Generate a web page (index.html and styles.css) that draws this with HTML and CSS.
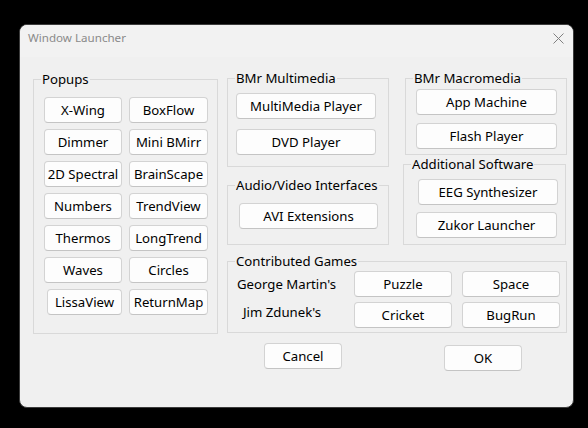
FILE: index.html
```html
<!DOCTYPE html>
<html>
<head>
<meta charset="utf-8">
<title>Window Launcher</title>
<link rel="stylesheet" href="styles.css">
</head>
<body>
<div class="window">
  <div class="titlebar">
    <span class="title">Window Launcher</span>
    <svg class="close" width="11" height="11" viewBox="0 0 11 11"><path d="M0.5 0.5 L10.5 10.5 M10.5 0.5 L0.5 10.5" stroke="#808080" stroke-width="1" fill="none"/></svg>
  </div>
  <div class="content">
    <fieldset class="group popups">
      <legend>Popups</legend>
      <div class="popup-grid">
        <button class="btn">X-Wing</button><button class="btn">BoxFlow</button>
        <button class="btn">Dimmer</button><button class="btn">Mini BMirr</button>
        <button class="btn">2D Spectral</button><button class="btn">BrainScape</button>
        <button class="btn">Numbers</button><button class="btn">TrendView</button>
        <button class="btn">Thermos</button><button class="btn">LongTrend</button>
        <button class="btn">Waves</button><button class="btn">Circles</button>
        <button class="btn lissa">LissaView</button><button class="btn">ReturnMap</button>
      </div>
    </fieldset>
    <div class="right">
      <div class="top-row">
        <div class="mid-col">
          <fieldset class="group multimedia">
            <legend>BMr Multimedia</legend>
            <div class="stack mm-stack">
              <button class="btn wide">MultiMedia Player</button>
              <button class="btn wide">DVD Player</button>
            </div>
          </fieldset>
          <fieldset class="group avi">
            <legend>Audio/Video Interfaces</legend>
            <div class="stack avi-stack">
              <button class="btn wide avi-btn">AVI Extensions</button>
            </div>
          </fieldset>
        </div>
        <div class="right-col">
          <fieldset class="group macro">
            <legend>BMr Macromedia</legend>
            <div class="stack macro-stack">
              <button class="btn wide2">App Machine</button>
              <button class="btn wide2">Flash Player</button>
            </div>
          </fieldset>
          <fieldset class="group additional">
            <legend>Additional Software</legend>
            <div class="stack add-stack">
              <button class="btn wide2 eeg">EEG Synthesizer</button>
              <button class="btn wide2">Zukor Launcher</button>
            </div>
          </fieldset>
        </div>
      </div>
      <fieldset class="group games">
        <legend>Contributed Games</legend>
        <div class="games-grid">
          <span class="author">George Martin's</span>
          <button class="btn game">Puzzle</button>
          <button class="btn game">Space</button>
          <span class="author author-jim">Jim Zdunek's</span>
          <button class="btn game">Cricket</button>
          <button class="btn game">BugRun</button>
        </div>
      </fieldset>
      <div class="actions">
        <button class="btn action">Cancel</button>
        <button class="btn action ok">OK</button>
      </div>
    </div>
  </div>
</div>
</body>
</html>
```
FILE: styles.css
```css
html, body {
  margin: 0;
  padding: 0;
}
body {
  background: #000;
  width: 588px;
  height: 428px;
  padding: 24px 0 0 19px;
  box-sizing: border-box;
  font-family: "Noto Sans", "Open Sans", sans-serif;
  color: #000;
}
.window {
  width: 555px;
  height: 384px;
  box-sizing: border-box;
  background: #f0f0f0;
  border: 1px solid #3c3c3c;
  border-radius: 8px;
  overflow: hidden;
}
.titlebar {
  height: 32px;
  display: flex;
  align-items: flex-start;
  background: #f2f2f2;
}
.title {
  font-size: 11.6px;
  line-height: 16px;
  color: #8a8a8a;
  margin: 5px 0 0 8px;
}
.close {
  margin: 8px 9px 0 auto;
  display: block;
}
.content {
  display: flex;
  align-items: flex-start;
  padding: 13px 0 0 13px;
}
.group {
  margin: 0;
  padding: 0;
  border: 1px solid #d9d9d9;
  box-sizing: border-box;
  min-width: 0;
}
.group legend {
  font-size: 13.2px;
  line-height: 16px;
  padding: 0 1px;
  margin-left: 7px;
  white-space: nowrap;
}
.btn {
  font-family: "Noto Sans", "Open Sans", sans-serif;
  font-size: 13.2px;
  color: #000;
  background: #fdfdfd;
  border: 1px solid #d3d3d3;
  border-bottom-color: #c4c4c4;
  border-radius: 4px;
  height: 26px;
  padding: 0;
  margin: 0;
  box-sizing: border-box;
  display: flex;
  align-items: center;
  justify-content: center;
  white-space: nowrap;
  overflow: visible;
}
/* Popups */
.popups {
  width: 185px;
  height: 263px;
  margin-top: 1px;
}
.popup-grid {
  display: grid;
  grid-template-columns: 78px 79px;
  grid-auto-rows: 26px;
  column-gap: 7px;
  row-gap: 6px;
  padding: 10px 0 0 10px;
}
.popup-grid .btn { width: 100%; }
.popup-grid .btn.lissa {
  width: 75px;
  justify-self: end;
}
/* right side */
.right {
  margin-left: 9px;
  width: 340px;
  display: flex;
  flex-direction: column;
}
.top-row {
  display: flex;
  align-items: flex-start;
}
.mid-col {
  width: 162px;
  display: flex;
  flex-direction: column;
}
.right-col {
  margin-left: 14px;
  width: 164px;
  display: flex;
  flex-direction: column;
}
.stack {
  display: flex;
  flex-direction: column;
}
.multimedia {
  height: 97px;
}
.mm-stack {
  padding: 7px 0 0 8px;
  gap: 10px;
}
.btn.wide { width: 140px; }
.avi {
  height: 68px;
  margin-top: 10px;
}
.avi-stack {
  padding: 10px 0 0 11px;
}
.btn.avi-btn { width: 139px; }
.macro {
  margin-left: 2px;
  width: 162px;
  height: 85px;
}
.macro-stack {
  padding: 3px 0 0 10px;
  gap: 8px;
}
.btn.wide2 { width: 141px; }
.additional {
  width: 163px;
  height: 89px;
  margin-top: 1px;
}
.add-stack {
  padding: 7px 0 0 12px;
  gap: 7px;
}
.btn.eeg {
  width: 140px;
  margin-left: 2px;
}
/* games */
.games {
  margin-top: 8px;
  width: 340px;
  height: 80px;
}
.games-grid {
  display: grid;
  grid-template-columns: 107px 98px 98px;
  grid-auto-rows: 26px;
  column-gap: 10px;
  row-gap: 5px;
  padding: 2px 0 0 9px;
  align-items: center;
}
.author {
  font-size: 13.2px;
  white-space: nowrap;
}
.author-jim {
  padding-left: 6px;
  margin-top: -6px;
}
.btn.game { width: 98px; }
/* dialog buttons */
.actions {
  display: flex;
  align-items: flex-start;
  margin-top: 10px;
  padding-left: 37px;
}
.btn.action { width: 78px; }
.btn.ok {
  margin-left: 102px;
  margin-top: 2px;
}
```
